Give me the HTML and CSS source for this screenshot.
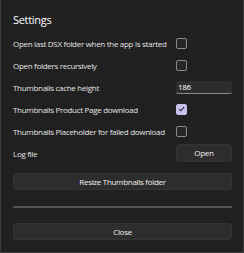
FILE: index.html
```
<!DOCTYPE html>
<html lang="en">
<head>
    <meta charset="UTF-8">
    <meta name="viewport" content="width=device-width, initial-scale=1.0">
    <title>Settings</title>
    <link rel="stylesheet" href="styles.css">
</head>
<body>
<div class="dialog">
    <h1>Settings</h1>
    <div class="settings-list">
        <div class="setting-row">
            <span class="label">Open last DSX folder when the app is started</span>
            <span class="checkbox"></span>
        </div>
        <div class="setting-row">
            <span class="label">Open folders recursively</span>
            <span class="checkbox"></span>
        </div>
        <div class="setting-row">
            <span class="label">Thumbnails cache height</span>
            <span class="textbox">186</span>
        </div>
        <div class="setting-row">
            <span class="label">Thumbnails Product Page download</span>
            <span class="checkbox checked">
                <svg width="7" height="6" viewBox="0 0 7 6"><path d="M1 3.2 L2.8 4.8 L6 1.2" fill="none" stroke="#2a2833" stroke-width="1.1"/></svg>
            </span>
        </div>
        <div class="setting-row">
            <span class="label">Thumbnails Placeholder for failed download</span>
            <span class="checkbox"></span>
        </div>
        <div class="setting-row">
            <span class="label">Log file</span>
            <span class="button small">Open</span>
        </div>
    </div>
    <div class="button wide resize">Resize Thumbnails folder</div>
    <div class="separator"></div>
    <div class="button wide">Close</div>
</div>
</body>
</html>
```
FILE: styles.css
```
html, body {
    margin: 0;
    padding: 0;
}

body {
    background-color: #202020;
    color: #e4e4e4;
    font-family: "Open Sans", "Noto Sans", sans-serif;
    font-size: 8px;
    letter-spacing: -0.3px;
}

.dialog {
    box-sizing: border-box;
    width: 244px;
    height: 253px;
    border: 1px solid #3c3c3c;
    border-top: none;
    padding: 0 11px 0 12px;
}

h1 {
    margin: 0;
    padding-top: 12px;
    height: 20px;
    font-size: 11px;
    font-weight: 400;
    line-height: 16px;
    letter-spacing: -0.3px;
    color: #ffffff;
}

.settings-list {
    display: flex;
    flex-direction: column;
}

.setting-row {
    display: grid;
    grid-template-columns: 1fr 56px;
    align-items: center;
    height: 22px;
}

.label {
    white-space: nowrap;
}

.checkbox {
    box-sizing: border-box;
    width: 11px;
    height: 11px;
    border: 1px solid #8b8b8b;
    border-radius: 2px;
    background-color: #272727;
    display: flex;
    align-items: center;
    justify-content: center;
}

.checkbox.checked {
    background-color: #c6c0ee;
    border-color: #c6c0ee;
}

.textbox {
    box-sizing: border-box;
    height: 13px;
    background-color: #2d2d2d;
    border-radius: 2px;
    border-bottom: 1px solid #8a8a8a;
    padding-left: 2px;
    line-height: 12px;
    color: #ffffff;
}

.button {
    box-sizing: border-box;
    background-color: #2d2d2d;
    border: 1px solid #343434;
    border-radius: 3px;
    text-align: center;
    color: #f0f0f0;
}

.button.small {
    height: 18px;
    line-height: 16px;
}

.button.wide {
    height: 17px;
    line-height: 15px;
}

.resize {
    margin-top: 9px;
}

.separator {
    height: 2px;
    background-color: #525252;
    margin: 16px 0 15px;
}
```
